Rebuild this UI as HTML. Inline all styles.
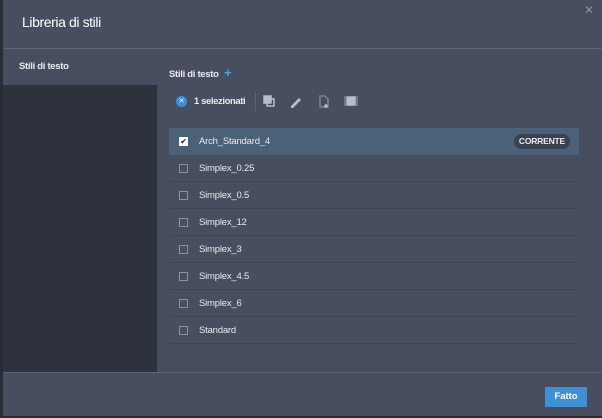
<!DOCTYPE html>
<html><head><style>
*{margin:0;padding:0;box-sizing:border-box}
body{width:602px;height:418px;background:#474e5f;font-family:"Liberation Sans",sans-serif;color:#e8eaee;overflow:hidden}
.abs{position:absolute}
.title{left:22px;top:14px;font-size:14px;color:#fff;letter-spacing:-0.4px}
.hline{left:3px;right:0;height:1px;background:#5b6474}
.left{left:3px;top:49px;width:154px;height:323px;background:#2e323d}
.leftsel{left:3px;top:49px;width:154px;height:36px;background:#474e5f;font-size:9.5px;font-weight:bold;padding:12px 0 0 16px;letter-spacing:-0.3px}
.row{left:169px;width:410px;height:27px;border-bottom:1px solid #3e4454;font-size:9.5px;line-height:27px;padding-left:30px;letter-spacing:-0.2px}
.cb{position:absolute;left:10px;top:9px;width:9px;height:9px;border:1px solid #8a92a2}
.sel{background:#4a6178;border-bottom:none}
.sel .cb{background:#fff;border-color:#fff}
.badge{position:absolute;right:9px;top:6px;height:15px;line-height:15px;padding:0 5px;border-radius:8px;background:#3a4250;font-size:8.5px;font-weight:bold;letter-spacing:-0.2px}
</style></head><body>
<div class="abs" style="left:0;top:0;width:3px;height:418px;background:#2a2d35"></div>
<div class="abs" style="left:0;top:416px;width:602px;height:2px;background:#2a2d35"></div>
<div class="abs title">Libreria di stili</div>
<div class="abs" style="right:8px;top:3px;color:#8a92a2;font-size:12px">✕</div>
<div class="abs hline" style="top:48px"></div>
<div class="abs left"></div>
<div class="abs leftsel">Stili di testo</div>
<div class="abs" style="left:169px;top:65px;font-size:9.5px;font-weight:bold;letter-spacing:-0.3px">Stili di testo <span style="color:#4aa3e8;font-size:13px;margin-left:3px">+</span></div>
<div class="abs" style="left:176px;top:96px;width:11px;height:11px;border-radius:50%;background:#3d8fd6;color:#fff;font-size:7px;text-align:center;line-height:11px">✕</div>
<div class="abs" style="left:194px;top:96px;font-size:9.5px;font-weight:bold;letter-spacing:-0.4px">1 selezionati</div>
<div class="abs" style="left:255px;top:92px;width:1px;height:19px;background:#5b6474"></div>
<svg class="abs" style="left:262px;top:93px" width="100" height="16" fill="none" stroke="#b8bec8" stroke-width="1.5">
<rect x="2" y="3" width="7" height="7" fill="#b8bec8"/><rect x="5" y="6" width="7" height="7"/>
<path d="M29 13l8-8 2 2-8 8h-2z" fill="#b8bec8" stroke="none"/>
<path d="M58 3h5l3 3v8h-8z" stroke="#7b8393"/><path d="M64 11v4M62 13h4" stroke="#b8bec8"/>
<rect x="85" y="4" width="8" height="8" fill="#b8bec8"/><path d="M83 3v10M95 3v10" stroke="#7b8393"/>
</svg>
<div class="abs row sel" style="top:128px"><span class="cb" style="font-size:8px;line-height:7px;color:#222;text-align:center">✔</span>Arch_Standard_4<span class="badge">CORRENTE</span></div>
<div class="abs row" style="top:155px"><span class="cb"></span>Simplex_0.25</div>
<div class="abs row" style="top:182px"><span class="cb"></span>Simplex_0.5</div>
<div class="abs row" style="top:209px"><span class="cb"></span>Simplex_12</div>
<div class="abs row" style="top:236px"><span class="cb"></span>Simplex_3</div>
<div class="abs row" style="top:263px"><span class="cb"></span>Simplex_4.5</div>
<div class="abs row" style="top:290px"><span class="cb"></span>Simplex_6</div>
<div class="abs row" style="top:317px"><span class="cb"></span>Standard</div>
<div class="abs hline" style="top:372px"></div>
<div class="abs" style="left:545px;top:387px;width:42px;height:20px;background:#3d8fd6;color:#fff;font-size:9.5px;font-weight:bold;text-align:center;line-height:20px">Fatto</div>
</body></html>
